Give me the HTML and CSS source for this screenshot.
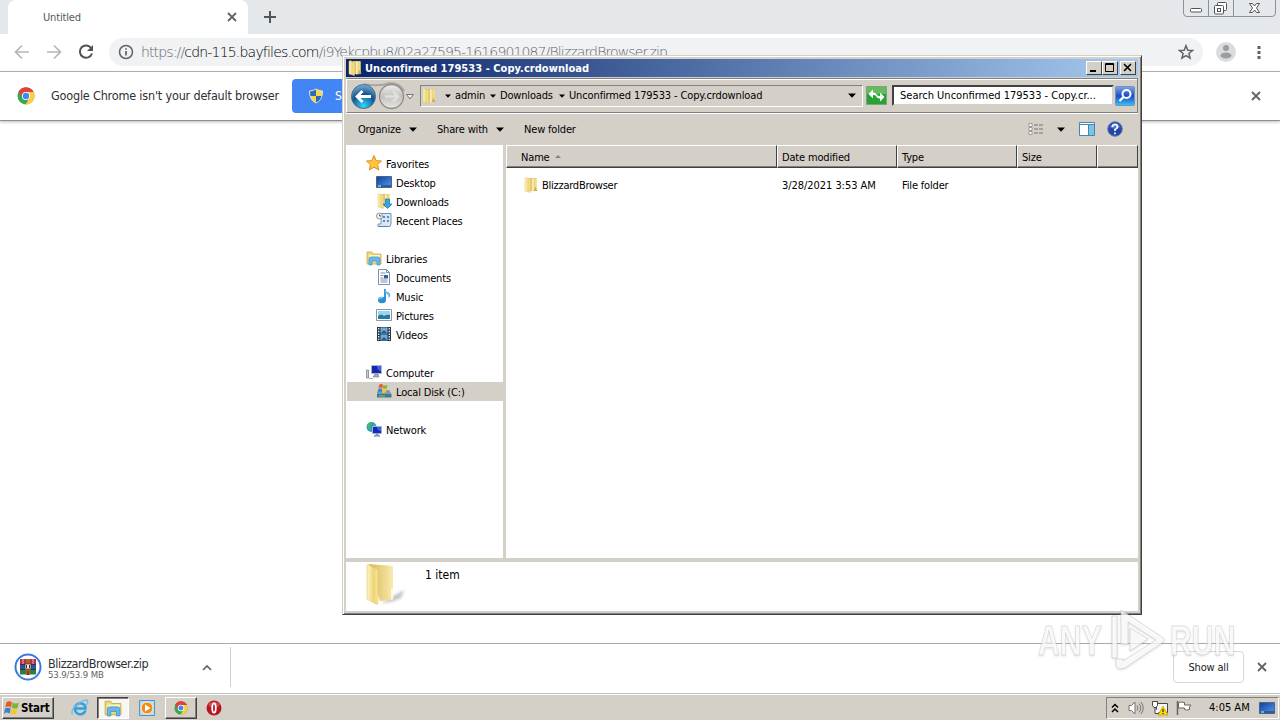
FILE: index.html
```html
<!DOCTYPE html>
<html lang="en">
<head>
<meta charset="utf-8">
<title>Desktop</title>
<link rel="stylesheet" href="styles.css">
</head>
<body>
<svg class="defs" width="0" height="0">
  <defs>
    <linearGradient id="gold" x1="0" x2="1"><stop offset="0" stop-color="#fff6c4"/><stop offset=".6" stop-color="#edd476"/><stop offset="1" stop-color="#f6e69c"/></linearGradient>
    <linearGradient id="blue" x1="0" y1="0" x2="1" y2="1"><stop offset="0" stop-color="#123c9c"/><stop offset="1" stop-color="#4e9cf0"/></linearGradient>
    <radialGradient id="orb" cx=".5" cy=".9" r=".9"><stop offset="0" stop-color="#35d6f2"/><stop offset=".45" stop-color="#1570b0"/><stop offset=".55" stop-color="#12508c"/><stop offset="1" stop-color="#79b2d8"/></radialGradient>
    <linearGradient id="orb2" x1="0" x2="0" y1="0" y2="1"><stop offset="0" stop-color="#eee"/><stop offset=".5" stop-color="#c4c2be"/><stop offset="1" stop-color="#e8e6e2"/></linearGradient>
    <symbol id="folder" viewBox="0 0 16 16"><path d="M6 1h7.500v13H6z" fill="#dfc468"/><path d="M9 1.500h4.500V14L9 14.500z" fill="url(#gold)"/><path d="M2 1.500 3 .5l4.500 2V15.500L2 14z" fill="url(#gold)" stroke="#dfc56c" stroke-width=".5"/><path d="M12 9.500l2.500 4.500H11z" fill="#c9ad57"/></symbol>
    <symbol id="chrome" viewBox="0 0 18 18"><circle cx="9" cy="9" r="8.500" fill="#34a853"/><path d="M9 9 1.600 4.800A8.500 8.500 0 0 1 16.400 4.800z" fill="#db4437"/><path d="M9 5h7.500A8.500 8.500 0 0 1 8.500 17.500L12.500 11z" fill="#ffcd40"/><path d="M1.600 4.800A8.500 8.500 0 0 1 16.500 5H9L5.500 11z" fill="#db4437"/><circle cx="9" cy="9" r="4.100" fill="#fff"/><circle cx="9" cy="9" r="3.200" fill="#4285f4"/></symbol>
    <symbol id="library" viewBox="0 0 16 16"><path d="M1 2h5l1 2h8v10H1z" fill="#f2d875" stroke="#c8a94c" stroke-width=".8"/><path d="M3 5h11v3H3z" fill="#fdf6c5"/><path d="M3 14V9q0-2 2-2h7q2 0 2 2v6h-3v-4H6v4H3z" fill="#69b8ec" stroke="#3d8fca" stroke-width=".7"/></symbol>
    <symbol id="monitor" viewBox="0 0 16 16"><path d="M.5 2.500h15v11H.5z" fill="url(#blue)" stroke="#4c6585"/><path d="M1 11h14v2H1z" fill="#285e9c"/><path d="M2 12h3" stroke="#7ed3d6" stroke-width="1.500"/></symbol>
    <symbol id="flag" viewBox="0 0 16 16"><path d="M3 3q2.500-2 5 0L7 7.500q-2.500-1.500-5 0z" fill="#e95a27"/><path d="M8.700 3.200q2.500 1.500 5.300 0L13 7.700q-2.500 1.500-5.200 0z" fill="#76b832"/><path d="M1.800 8.500q2.500-1.500 5 0L6 13q-2.500-1.800-5.200 0z" fill="#3983d3"/><path d="M7.600 8.700q2.500 1.500 5.200 0L11.800 13q-2.500 1.500-5.100.300z" fill="#f9c727"/></symbol>
    <symbol id="shield" viewBox="0 0 16 16"><path d="M8 1Q5 3 1.500 3q0 9 6.500 12 6.500-3 6.500-12Q11 3 8 1z" fill="#f9d648" stroke="#dfe5eb"/><path d="M8 1.500Q5 3.500 2 3.500L2.500 8H8zM8 8h5.500q-1.500 5-5.500 6.500z" fill="#2c68bb"/></symbol>
    <symbol id="cross" viewBox="0 0 10 10"><path d="m1 1 8 8M9 1 1 9" fill="none" stroke="#5f6368" stroke-width="1.800"/></symbol>
    <symbol id="down" viewBox="0 0 8 5"><path d="M0 .5h8L4 4.700z" fill="#000"/></symbol>
  </defs>
</svg>

<div class="browser">
  <div class="tabstrip">
    <div class="tab"><span class="tab-title">Untitled</span><svg class="x10"><use href="#cross"/></svg></div>
    <svg class="plus" viewBox="0 0 12 12"><path d="M6 0v12M0 6h12" stroke="#50555a" stroke-width="2"/></svg>
    <svg class="winctl" viewBox="0 0 94 18"><path d="M.5 0v13q0 3.500 3.500 3.500h85q3.500 0 3.500-3.500V0M25.500 0v16M50.500 0v16" fill="none" stroke="#8d9298"/><g fill="#fff" stroke="#4f555b"><rect x="7.500" y="8.500" width="11" height="3.500" rx="1"/><rect x="34.500" y="2.500" width="9" height="8" rx="1"/><rect x="31.500" y="5.500" width="9" height="8.500" rx="1"/><rect x="34.500" y="8.500" width="3" height="3"/><path d="M66.500 3.500h3l2 2.500 2-2.500h3l-3 4.500 3 4.500h-3l-2-2.500-2 2.500h-3l3-4.500z"/></g></svg>
  </div>
  <div class="toolbar">
    <svg class="nav-ic" viewBox="0 0 16 16"><path d="M15 8H2M8 1.500 1.500 8 8 14.500" fill="none" stroke="#b5b7ba" stroke-width="1.700"/></svg>
    <svg class="nav-ic" viewBox="0 0 16 16"><path d="M1 8h13M8 1.500 14.500 8 8 14.500" fill="none" stroke="#b5b7ba" stroke-width="1.700"/></svg>
    <svg class="nav-ic" viewBox="0 0 16 16"><path d="M13.300 4.200A6.200 6.200 0 1 0 14 9.500" fill="none" stroke="#4f5459" stroke-width="2"/><path d="M15 1v6H9z" fill="#4f5459"/></svg>
    <div class="omnibox">
      <svg class="info" viewBox="0 0 16 16"><circle cx="8" cy="8" r="6.500" fill="none" stroke="#5f6368" stroke-width="1.500"/><path d="M8 7v4.500M8 4.200v1.600" stroke="#5f6368" stroke-width="1.700"/></svg>
      <span class="url">https://<b>cdn-115.bayfiles.com</b>/i9Yekcpbu8/02a27595-1616901087/BlizzardBrowser.zip</span>
      <svg class="star" viewBox="0 0 16 16"><path d="m8 1.700 1.800 4.500 4.700.3-3.600 3 1.200 4.600L8 11.600l-4.100 2.500 1.200-4.600-3.600-3 4.700-.3z" fill="none" stroke="#5f6368" stroke-width="1.500"/></svg>
    </div>
    <svg class="avatar" viewBox="0 0 20 20"><circle cx="10" cy="10" r="10" fill="#dadce0"/><circle cx="10" cy="6" r="3" fill="#9b9da0"/><ellipse cx="10" cy="13.500" rx="5.500" ry="3" fill="#9b9da0"/></svg>
    <svg class="dots" viewBox="0 0 4 14"><path d="M.5 1h3v3h-3zM.5 6h3v3h-3zM.5 11h3v3h-3z" fill="#5f6368"/></svg>
  </div>
  <div class="infobar">
    <svg class="i18"><use href="#chrome"/></svg>
    <span class="info-text">Google Chrome isn't your default browser</span>
    <div class="default-btn"><svg class="i16"><use href="#shield"/></svg><span>Set as default</span></div>
    <svg class="x10 info-x"><use href="#cross"/></svg>
  </div>
  <div class="page"></div>
  <div class="downloads">
    <svg class="rar" viewBox="0 0 28 28"><circle cx="14" cy="14" r="12.500" fill="#fff" stroke="#3979de" stroke-width="2"/><path d="M6 6h16v5.500H6z" fill="#b5304c"/><path d="M6 11.500h16v5H6z" fill="#304da8"/><path d="M6 16.500h16V21.500H6z" fill="#28813b"/><path d="M12 6h4v16h-4z" fill="#b95e21"/><path d="M11 11h6v5h-6z" fill="#eee" stroke="#333" stroke-width=".7"/><path d="M12.500 12v3M15.500 12v3M14 18v4" stroke="#402020"/><path d="M6 11.500h5M17 11.500h5M6 16.500h5M17 16.500h5" stroke="#222" stroke-width=".8"/><path d="M9 6v5M19 6v5" stroke="#e8b1b8"/></svg>
    <div class="dl-item"><span class="dl-name">BlizzardBrowser.zip</span><span class="dl-size">53.9/53.9 MB</span></div>
    <svg class="chev" viewBox="0 0 10 7"><path d="m1 6 4-4 4 4" fill="none" stroke="#5f6368" stroke-width="1.700"/></svg>
    <div class="dl-sep"></div>
    <div class="show-all"><span>Show all</span></div>
    <svg class="x10"><use href="#cross"/></svg>
  </div>
</div>

<div class="taskbar">
  <div class="start raised"><svg class="i18"><use href="#flag"/></svg><span>Start</span></div>
  <svg class="ie" viewBox="0 0 18 18"><path d="M14.500 11.500A5.500 5.500 0 1 1 14.500 8v1.500H5" fill="none" stroke="#2f9fe4" stroke-width="2.400"/><path d="M1.500 15.500Q-1 11 7 5t9.500-3q1 1-1 4" fill="none" stroke="#6db9e6" stroke-width="1.300"/></svg>
  <div class="task pressed"><svg class="i18"><use href="#library"/></svg></div>
  <svg class="wmp" viewBox="0 0 16 16"><path d="M.5.500h15v15H.5z" fill="#b6dcf4" stroke="#4c94c7"/><circle cx="8" cy="8" r="6" fill="#f28b1b" stroke="#fff3d0"/><path d="m6 4.500 5.500 3.500L6 11.500z" fill="#fff"/></svg>
  <div class="task raised"><svg class="i14"><use href="#chrome"/></svg></div>
  <svg class="opera" viewBox="0 0 16 16"><circle cx="8" cy="8" r="7.500" fill="#b51620"/><path d="M2 4Q8-1 14 4L12 7H4z" fill="#df6d6d" opacity=".6"/><ellipse cx="8" cy="8" rx="1.800" ry="4.700" fill="#b51620" stroke="#fff" stroke-width="1.800"/></svg>
  <div class="tray">
    <svg class="updown" viewBox="0 0 8 10"><path d="m1 4.500 3-3 3 3M1 9l3-3 3 3" fill="none" stroke="#000" stroke-width="1.500"/></svg>
    <svg class="i16" viewBox="0 0 16 16"><path d="M1 5.500h2.500L7 2v12l-3.500-3.500H1z" fill="#fff" stroke="#77736d"/><path d="M9 5.500q2 2.500 0 5M11 3.500q3.500 4.500 0 9M13 2q4.500 6 0 12" fill="none" stroke="#77736d"/></svg>
    <svg class="i16" viewBox="0 0 16 16"><path d="M4.500 3.500h11v9h-11z" fill="#f5f5f5" stroke="#454545"/><path d="M.5 1.500h5v4l-1.500 2H2l-1.500-2zM3 7.500v6h4" fill="#fff" stroke="#454545"/><path d="M11 6 16 15H6z" fill="#ffd800" stroke="#b99200" stroke-width=".6"/><path d="M11 9v3M11 13v1" stroke="#000"/></svg>
    <svg class="i16" viewBox="0 0 16 16"><path d="M1.500 1v14" stroke="#69645f" stroke-width="1.500"/><path d="M2.500 2.500q3-1 6 0V5h6.500l-1.500 2v2.500q-3 1-5 0V8h-6z" fill="#fff" stroke="#69645f"/></svg>
    <span class="clock">4:05 AM</span>
    <svg class="i16"><use href="#monitor"/></svg>
  </div>
</div>

<div class="window">
  <div class="title">
    <svg class="i16"><use href="#folder"/></svg>
    <span>Unconfirmed 179533 - Copy.crdownload</span>
    <div class="cap"><svg viewBox="0 0 14 12"><path d="M3 9h6" stroke="#000" stroke-width="2"/></svg></div>
    <div class="cap"><svg viewBox="0 0 14 12"><path d="M2.500 1.500h8v8h-8zM2 2.500h9" fill="none" stroke="#000"/></svg></div>
    <div class="cap last"><svg viewBox="0 0 14 12"><path d="m3 2 7 7M10 2 3 9" stroke="#000" stroke-width="1.600"/></svg></div>
  </div>
  <div class="navrow">
    <svg class="orbs" viewBox="0 0 68 30"><path d="M16 3Q30 6 42 2q10 0 14 8" fill="none" stroke="#aaa69e" stroke-width="2"/><circle cx="15.500" cy="15.500" r="12" fill="url(#orb)" stroke="#4c6d86"/><path d="M23 15.500H9M14.500 10 9 15.500l5.500 5.500" fill="none" stroke="#fff" stroke-width="2.800"/><circle cx="43.500" cy="15.500" r="12" fill="url(#orb2)" stroke="#8e8c88" stroke-width="1.300"/><path d="M37 15.500h13M45 10.500l5 5-5 5" fill="none" stroke="#e2e0dc" stroke-width="2.500"/><path d="M58.500 13.500h7L62 18z" fill="#eee" stroke="#777"/></svg>
    <div class="address">
      <svg class="i16"><use href="#folder"/></svg>
      <svg class="arr a1"><use href="#down"/></svg><span class="c1">admin</span>
      <svg class="arr"><use href="#down"/></svg><span class="c2">Downloads</span>
      <svg class="arr"><use href="#down"/></svg><span class="c3">Unconfirmed 179533 - Copy.crdownload</span>
      <svg class="addr-down"><use href="#down"/></svg>
    </div>
    <svg class="refresh" viewBox="0 0 21 19"><path d="M.5.500h20v18H.5z" fill="#28a234" stroke="#7da37c"/><path d="M1 1h19v7H1z" fill="#61bd60"/><path d="M2.500 8 7 3.500v3q4 0 4.500 4.500-2-2.200-4.500-2v3.500zM18.500 11 14 15.500v-3q-4 0-4.500-4.500 2 2.200 4.500 2V6.500z" fill="#fff"/></svg>
    <div class="search"><span>Search Unconfirmed 179533 - Copy.cr...</span></div>
    <svg class="mag" viewBox="0 0 20 20"><defs><linearGradient id="mg" x2="0" y2="1"><stop offset="0" stop-color="#7da8e8"/><stop offset=".5" stop-color="#1e49c8"/><stop offset="1" stop-color="#35c7f7"/></linearGradient></defs><rect x=".5" y=".5" width="19" height="19" rx="1" fill="url(#mg)" stroke="#7790b8"/><circle cx="11.500" cy="8" r="4" fill="none" stroke="#fff" stroke-width="2"/><path d="m8.500 11-4 4" stroke="#fff" stroke-width="2.400"/></svg>
  </div>
  <div class="cmdbar">
    <span class="m1">Organize</span><svg class="arr8"><use href="#down"/></svg>
    <span class="m2">Share with</span><svg class="arr8"><use href="#down"/></svg>
    <span class="m3">New folder</span>
    <svg class="views" viewBox="0 0 16 14"><path d="M1 1.500h3v3H1zM1 5.500h3v3H1zM1 9.500h3v3H1z" fill="#fff" stroke="#8a8a8a" stroke-width=".8"/><path d="M6 3h4M11 3h4M6 7h4M11 7h4M6 11h4M11 11h4" stroke="#77756f"/></svg>
    <svg class="arr8 va"><use href="#down"/></svg>
    <svg class="pane" viewBox="0 0 16 14"><path d="M.5.500h15v13H.5z" fill="#fff" stroke="#4a83ad"/><path d="M10 3h5v10h-5z" fill="#79c5e6"/><path d="M9.500 2v12M0 2.500h16" stroke="#4a83ad"/></svg>
    <svg class="help" viewBox="0 0 16 16"><circle cx="8" cy="8" r="7.300" fill="#2246a8" stroke="#6b7fae"/><path d="M2.500 6Q8-2 13.500 6 8 9 2.500 6z" fill="#7192dc" opacity=".7"/><path d="M5.500 6q0-2.500 2.500-2.500T10.500 6Q10.500 7.300 8 8.500V10M8 11.500v1.700" fill="none" stroke="#fff" stroke-width="1.700"/></svg>
  </div>
  <div class="main">
    <div class="side">
      <div class="row top"><svg class="i16" viewBox="0 0 16 16"><path d="m8 .5 2.200 5.200 5.300.3-4 3.600 1.300 5.400L8 12.200 3.200 15l1.300-5.400L.5 6l5.300-.3z" fill="#ffc73f" stroke="#e08a20"/></svg><span>Favorites</span></div>
      <div class="row"><svg class="i16"><use href="#monitor"/></svg><span>Desktop</span></div>
      <div class="row"><svg class="i16" viewBox="0 0 16 16"><use href="#folder"/><path d="M9.500 6h4v5H16l-4.500 4.500L7 11h2.500z" fill="#39a5df" stroke="#1873ad" stroke-width=".7"/></svg><span>Downloads</span></div>
      <div class="row"><svg class="i16" viewBox="0 0 16 16"><path d="M5 1.500h10V12l-1 2.500H2V12h3z" fill="#d7e6f2" stroke="#7894ad"/><path d="M7 4h2v2H7zM11 4h2v2h-2zM7 8h2v2H7zM11 8h2v2h-2z" fill="#5c8eb8"/><path d="M2 14.500h10" stroke="#667e93"/><circle cx="3.500" cy="4" r="3" fill="#f4f4f4" stroke="#8a949e"/><path d="M3.500 2.500V4H5" fill="none" stroke="#556"/></svg><span>Recent Places</span></div>
      <div class="row top gap"><svg class="i16"><use href="#library"/></svg><span>Libraries</span></div>
      <div class="row"><svg class="i16" viewBox="0 0 16 16"><path d="M2.500.5h8l3 3v12h-11z" fill="#fff" stroke="#7993b1"/><path d="M4.500 4h5M4.500 6.500h3M4.500 9h3M4.500 11h7M4.500 13h7" stroke="#788fa9"/><path d="M8 6h4v3.500H8z" fill="#365f9f"/><path d="M10.500.5v3h3" fill="none" stroke="#7993b1"/></svg><span>Documents</span></div>
      <div class="row"><svg class="i16" viewBox="0 0 16 16"><path d="M9 1v11" stroke="#268bd0" stroke-width="1.800"/><path d="M9 .5Q10 4 13.500 5q2 3-1 5 .5-4-3.500-5z" fill="#61b8e9"/><ellipse cx="6" cy="12" rx="4" ry="3.200" fill="#278fd3"/><path d="M3 11q1.500-2 4-1" fill="none" stroke="#b6e4fb"/></svg><span>Music</span></div>
      <div class="row"><svg class="i16" viewBox="0 0 16 16"><path d="M.5 2.500h15v11H.5z" fill="#fff" stroke="#8998a6"/><path d="M2 4h12v8H2z" fill="#9bd6ef"/><path d="M2 9q3-3 6 0 3-2 6-1v4H2z" fill="#28799d"/></svg><span>Pictures</span></div>
      <div class="row"><svg class="i16" viewBox="0 0 16 16"><path d="M1 1h14v14H1z" fill="#263747"/><path d="M4.500 1.500h7v6h-7zM4.500 8.500h7v6h-7z" fill="#68aadc"/><path d="m5 7 3-3 3 3zM5 14l3-3 3 3z" fill="#285c87"/><path d="M2.700 2v12M13.300 2v12" stroke="#e5edf3" stroke-width="1.300" stroke-dasharray="1.500 1.200"/></svg><span>Videos</span></div>
      <div class="row top gap"><svg class="i16" viewBox="0 0 16 16"><path d="M.5 6h2v8h-2z" fill="#c7cfd9" stroke="#7d8793" stroke-width=".8"/><path d="M5.500 1.500h10v8h-10z" fill="#1827a8" stroke="#aab6d1"/><path d="M11 2h4v5q-4 0-4-5z" fill="#3d62e6"/><path d="M9 10h3l1 3H7zM3 14.500h4" fill="#9fa9b9" stroke="#7b8798" stroke-width=".7"/></svg><span>Computer</span></div>
      <div class="row selected"><svg class="i16" viewBox="0 0 16 16"><path d="m1 9 3-2h9l2 3v4H1z" fill="#839aa9"/><path d="M1 11h14.500v3.500H1z" fill="#3e7a91"/><path d="M3 13h6" stroke="#66d76e"/><use href="#flag" x="1" y="-1" width="12" height="13"/></svg><span>Local Disk (C:)</span></div>
      <div class="row top gap"><svg class="i16" viewBox="0 0 16 16"><circle cx="5.500" cy="6" r="5" fill="#3394d1"/><path d="M1 5q1-4 5-4 0 3-2 4l1 4q-3 0-4-4zM7 3l3 1v3H7z" fill="#42ba68"/><path d="M6.500 5.500h9v7h-9z" fill="#1429b5" stroke="#9eb4d7"/><path d="M11 6h4v4q-4 0-4-4z" fill="#3d62e6"/><path d="M10 13h2v2h2H8h2z" fill="#8592a7" stroke="#8592a7"/></svg><span>Network</span></div>
    </div>
    <div class="content">
      <div class="head">
        <div class="h h1"><span>Name</span><svg class="sort" viewBox="0 0 6 3"><path d="M0 3h6L3 0z" fill="#85817b"/></svg></div>
        <div class="h h2"><span>Date modified</span></div>
        <div class="h h3"><span>Type</span></div>
        <div class="h h4"><span>Size</span></div>
        <div class="h h5"></div>
      </div>
      <div class="file"><svg class="i16"><use href="#folder"/></svg><span class="f1">BlizzardBrowser</span><span class="f2">3/28/2021 3:53 AM</span><span class="f3">File folder</span></div>
    </div>
  </div>
  <div class="details">
    <svg class="big" viewBox="0 0 42 44"><defs><filter id="soft"><feGaussianBlur stdDeviation="1.500"/></filter><linearGradient id="fold" x2="1"><stop offset="0" stop-color="#d8b855"/><stop offset="1" stop-color="#f8ebad"/></linearGradient></defs><path d="M16 41 39 28l-3 8-10 4z" fill="#aaa" opacity=".7" filter="url(#soft)"/><path d="M4 2 28 4v34l-13 1z" fill="url(#fold)"/><path d="M2 4q0-2 2-1l9 5v33q0 2-2 1L2 37z" fill="url(#gold)" stroke="#e1c668" stroke-width=".6"/><path d="M27 27v10" stroke="#fff" stroke-width="1.500"/></svg>
    <span>1 item</span>
  </div>
</div>

<div class="watermark">
  <span class="wm-text">ANY</span>
  <svg class="wm-logo" viewBox="0 0 56 66"><path d="M2 8h5v42H2zM11 2l41 27q4 3 0 6L15 60q-9 3-9-4v-5h7v2l33-21-28-18v22h-7zM20 20 38 31 20 43z" fill="#fff" fill-opacity=".75" stroke="#bdbdbd" stroke-opacity=".5"/></svg>
  <span class="wm-text">RUN</span>
</div>
</body>
</html>
```

FILE: styles.css
```css
* { box-sizing: border-box; }
body { margin: 0; width: 1280px; height: 720px; overflow: hidden; display: flex; flex-direction: column; background: #fff; color: #000; font: 11px/14px "DejaVu Sans Condensed", "DejaVu Sans", sans-serif; font-stretch: condensed; letter-spacing: -.17px; }
svg { flex: none; display: block; }
span { white-space: nowrap; }
.defs { position: absolute; }
.i14 { width: 14px; height: 14px; }
.i16 { width: 16px; height: 16px; }
.i18 { width: 18px; height: 18px; }
.x10 { width: 10px; height: 10px; }

.browser { height: 693px; display: flex; flex-direction: column; }
.tabstrip { height: 34px; background: #e4e8eb; display: flex; align-items: center; padding-left: 8px; }
.tab { width: 240px; height: 34px; background: #fff; border-radius: 8px 8px 0 0; display: flex; align-items: center; justify-content: space-between; padding: 0 11px 0 35px; color: #55585c; }
.tab-title { padding-top: 1px; }
.plus { width: 12px; height: 12px; margin-left: 16px; }
.winctl { width: 94px; height: 18px; margin-left: auto; margin-right: 3px; align-self: flex-start; }
.toolbar { height: 38px; border-bottom: 1px solid #a9abad; display: flex; align-items: center; padding: 0 19px 2px 14px; }
.nav-ic { width: 16px; height: 16px; margin-right: 16px; }
.omnibox { width: 1094px; height: 28px; margin-left: -1px; border-radius: 14px; background: #f0f2f4; display: flex; align-items: center; padding: 0 9px 0 9px; }
.info { width: 16px; height: 16px; }
.url { margin-left: 7px; font: 200 14px/18px "DejaVu Sans", sans-serif; font-stretch: condensed; color: #63676c; letter-spacing: -.87px; }
.url b { font-weight: 200; color: #000; letter-spacing: -.8px; }
.star { width: 16px; height: 16px; margin-left: auto; }
.avatar { width: 20px; height: 20px; margin-left: 13px; }
.dots { width: 4px; height: 14px; margin-left: auto; }
.infobar { height: 49px; border-bottom: 1px solid #8e8e8e; box-shadow: 0 1px 3px #bbb; display: flex; align-items: center; padding: 0 19px 0 17px; }
.info-text { margin-left: 16px; width: 241px; font-size: 12.500px; color: #2d3034; letter-spacing: -.18px; }
.default-btn { width: 120px; height: 34px; border-radius: 4px; background: #4285f4; color: #fff; display: flex; align-items: center; gap: 11px; padding-left: 16px; font-size: 12px; margin-top: -1px; }
.info-x { margin-left: auto; }
.page { flex: 1; }
.downloads { height: 50px; border-top: 1px solid #a9abad; display: flex; align-items: center; padding: 0 13px 3px 14px; }
.rar { width: 28px; height: 28px; }
.dl-item { width: 160px; margin-left: 6px; display: flex; flex-direction: column; padding-top: 3px; }
.dl-name { font-size: 12.500px; line-height: 12px; color: #2d3034; letter-spacing: -.43px; }
.dl-size { font-size: 9.500px; line-height: 10px; color: #5f6368; letter-spacing: -.1px; }
.chev { width: 10px; height: 7px; margin-left: -6px; }
.dl-sep { width: 1px; height: 40px; background: #cfd0d2; margin-left: 18px; }
.show-all { width: 71px; height: 32px; margin-left: auto; margin-right: 13px; border: 1px solid #d5d7da; border-radius: 4px; display: flex; align-items: center; justify-content: center; padding-top: 2px; color: #202226; }

.taskbar { height: 27px; background: #d4d0c8; border-top: 1px solid #c4c2be; box-shadow: inset 0 1px #fff; display: flex; align-items: center; padding: 1px 1px 0 2px; }
.raised { border: 1px solid; border-color: #fff #404040 #404040 #fff; box-shadow: inset -1px -1px #808080; }
.pressed { border: 1px solid; border-color: #404040 #fff #fff #404040; background: #f7f6f3; box-shadow: inset 1px 1px #808080; }
.start { width: 52px; height: 22px; display: flex; align-items: center; font-weight: bold; font-size: 11.500px; letter-spacing: -.2px; }
.task { width: 32px; height: 22px; display: flex; align-items: center; justify-content: center; }
.ie { width: 18px; height: 18px; margin: 0 8px 0 17px; }
.wmp { width: 16px; height: 16px; margin: 0 10px; }
.opera { width: 16px; height: 16px; margin-left: 9px; }
.tray { width: 173px; height: 22px; margin-left: auto; border: 1px solid; border-color: #808080 #fff #fff #808080; display: flex; align-items: center; padding: 0 2px 0 4px; gap: 8px; }
.updown { width: 8px; height: 10px; }
.tray .i16:nth-child(n+2):nth-child(-n+4) { margin-left: 1px; margin-right: -1px; }
.clock { width: 41px; margin: 0 1px 0 10px; letter-spacing: 0; }

.window { position: absolute; left: 342px; top: 55px; width: 800px; height: 560px; background: #d4d0c8; border: 1px solid; border-color: #d4d0c8 #404040 #404040 #d4d0c8; box-shadow: inset 1px 1px #fff, inset -1px -1px #808080; padding: 3px; display: flex; flex-direction: column; }
.title { height: 18px; background: linear-gradient(90deg, #0a246a, #a6caf0); color: #fff; display: flex; align-items: center; padding: 0 2px 0 1px; font-weight: bold; }
.title span { margin: 0 auto 0 2px; padding-top: 1px; letter-spacing: .05px; }
.cap { width: 16px; height: 14px; background: #d4d0c8; border: 1px solid; border-color: #fff #404040 #404040 #fff; }
.cap svg { width: 14px; height: 12px; }
.cap.last { margin-left: 2px; }
.navrow { height: 35px; margin-top: 1px; border: 1px solid #808080; border-left-color: #fff; box-shadow: inset 0 1px #fff, 0 1px #fff; display: flex; align-items: center; padding-left: 1px; }
.orbs { width: 68px; height: 30px; }
.address { width: 443px; height: 22px; margin-left: 4px; border: 1px solid; border-color: #808080 #fff #fff #808080; display: flex; align-items: center; }
.arr { width: 6px; height: 4px; margin: 0 4px 0 5px; }
.arr.a1 { margin-left: 8px; }
.c1 { width: 30px; }
.c2 { width: 54px; }
.c3 { letter-spacing: -.13px; }
.addr-down { width: 8px; height: 5px; margin-left: auto; margin-right: 6px; }
.refresh { width: 21px; height: 19px; margin-left: 3px; }
.search { width: 222px; height: 21px; margin-left: 5px; background: #fff; border: 2px solid; border-color: #404040 #d4d0c8 #d4d0c8 #404040; padding: 1px 0 0 6px; display: flex; align-items: center; letter-spacing: 0; }
.mag { width: 20px; height: 20px; margin-left: 1px; }
.cmdbar { height: 32px; display: flex; align-items: center; padding: 0 15px 0 12px; }
.cmdbar span { padding-top: 1px; }
.arr8 { width: 8px; height: 5px; }
.m1 { width: 51px; }
.m2 { width: 59px; margin-left: 20px; }
.m3 { margin-left: 20px; }
.views { width: 16px; height: 14px; margin-left: auto; }
.va { margin-left: 13px; }
.pane { width: 16px; height: 14px; margin-left: 14px; }
.help { width: 16px; height: 16px; margin-left: 12px; }
.main { height: 413px; display: flex; gap: 3px; }
.side { width: 157px; background: #fff; padding-top: 9px; padding-left: 1px; }
.row { height: 19px; display: flex; align-items: center; gap: 4px; padding: 0 0 1px 29px; }
.row span { padding-top: 3px; }
.row.top { padding-left: 19px; }
.row.gap { margin-top: 19px; }
.selected { background: #d4d0c8; }
.content { width: 632px; background: #fff; }
.head { height: 23px; display: flex; }
.h { display: flex; align-items: center; padding: 2px 0 0 4px; background: #d4d0c8; border: 1px solid; border-color: #fff #404040 #404040 #fff; box-shadow: inset 0 -1px #808080; }
.h1 { width: 271px; padding-left: 14px; gap: 5px; }
.h2, .h3 { width: 120px; }
.h4 { width: 80px; }
.h5 { width: 41px; }
.sort { width: 6px; height: 3px; margin-top: -3px; }
.file { height: 20px; margin-top: 7px; padding-left: 17px; display: flex; align-items: center; }
.file span { padding-top: 1px; }
.f1 { width: 240px; margin-left: 3px; letter-spacing: -.25px; }
.f2 { width: 120px; letter-spacing: -.05px; }
.details { height: 49px; margin-top: 4px; background: #fff; display: flex; align-items: flex-start; padding-left: 19px; }
.big { width: 42px; height: 44px; }
.details span { margin: 6px 0 0 18px; font-size: 12px; letter-spacing: 0; }
.watermark { position: absolute; left: 1038px; top: 608px; width: 200px; height: 66px; display: flex; align-items: center; gap: 4px; filter: drop-shadow(0 1px 1px rgba(0,0,0,.15)); }
.wm-text { width: 68px; font: bold 42px/44px "Liberation Sans", sans-serif; letter-spacing: 0; transform: scaleX(.72); transform-origin: left; color: rgba(255,255,255,.75); -webkit-text-stroke: .8px rgba(185,185,185,.45); }
.wm-logo { width: 56px; height: 66px; }
```
